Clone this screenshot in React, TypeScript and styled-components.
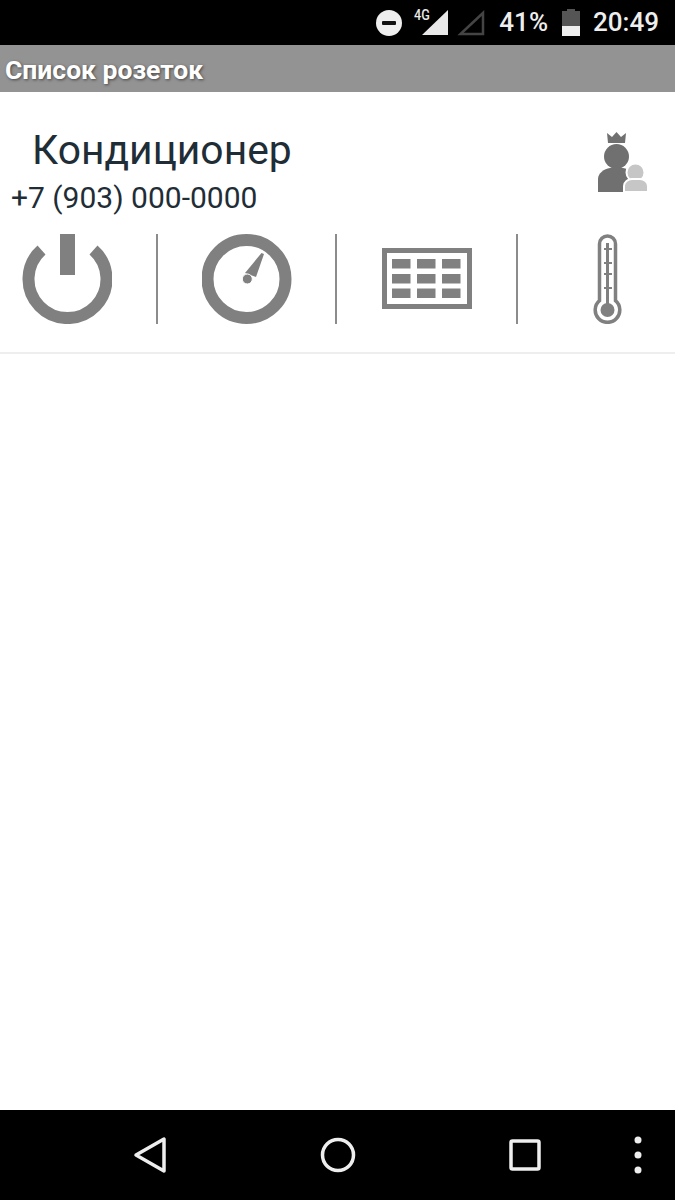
import React from 'react'
import styled, { createGlobalStyle } from 'styled-components'

const GlobalStyle = createGlobalStyle`
  html, body {
    margin: 0;
    padding: 0;
    background: #fff;
    font-family: Roboto, "Noto Sans", sans-serif;
  }
`

const Page = styled.div`
  display: flex;
  flex-direction: column;
  width: 675px;
  height: 1200px;
  overflow: hidden;
  background: #fff;
`

const StatusBar = styled.div`
  display: flex;
  align-items: center;
  justify-content: flex-end;
  flex-shrink: 0;
  height: 45px;
  padding-right: 16px;
  background: #000;
  color: #eee;
`

const StatusText = styled.span<{ $left: number }>`
  margin-left: ${(p) => p.$left}px;
  font-size: 26px;
  font-weight: 500;
  line-height: 45px;
`

const StatusIcon = styled.svg<{ $left: number }>`
  display: block;
  margin-left: ${(p) => p.$left}px;
`

const NetworkLabel = styled.span`
  align-self: flex-start;
  width: 18px;
  margin-left: 12px;
  margin-right: -11px;
  padding-top: 8px;
  font-size: 14px;
  font-weight: 500;
  line-height: 14px;
  color: #e8e8e8;
  white-space: nowrap;
  transform: scaleX(0.9);
  transform-origin: left;
`

const TitleBar = styled.div`
  flex-shrink: 0;
  height: 47px;
  padding-left: 5px;
  background: #939393;
  color: #fff;
  font-size: 26.5px;
  font-weight: 700;
  line-height: 49px;
  text-shadow: 1px 1px 3px #444;
`

const Item = styled.section`
  flex-shrink: 0;
  border-bottom: 2px solid #eee;
`

const ItemHeader = styled.div`
  display: flex;
  justify-content: space-between;
  height: 142px;
`

const Names = styled.div`
  padding-top: 33px;
  color: #1f2d36;
`

const Name = styled.div`
  padding-left: 32px;
  font-size: 40.8px;
  line-height: 50px;
`

const Phone = styled.div`
  padding-left: 11px;
  font-size: 30px;
  line-height: 46px;
`

const OwnerIcon = styled.svg`
  display: block;
  margin: 40px 26px 0 0;
`

const Actions = styled.div`
  display: flex;
  gap: 44px;
  padding: 0 0 28px 22px;
`

const ActionIcon = styled.svg`
  display: block;
  flex-shrink: 0;
  width: 90px;
  height: 90px;
  color: #808080;
`

const Divider = styled.div<{ $nudge?: number }>`
  flex-shrink: 0;
  width: 2px;
  height: 90px;
  margin-left: ${(p) => p.$nudge || 0}px;
  margin-right: ${(p) => -(p.$nudge || 0)}px;
  background: #8c8c8c;
`

const Spacer = styled.div`
  flex: 1;
`

const NavBar = styled.nav`
  display: flex;
  align-items: center;
  flex-shrink: 0;
  height: 90px;
  padding-left: 132px;
  background: #000;
  color: #eee;
`

const NavIcon = styled.svg<{ $left: number }>`
  display: block;
  margin-left: ${(p) => p.$left}px;
`

const App: React.FC = () => (
  <Page>
    <GlobalStyle />
    <StatusBar>
      <StatusIcon $left={0} width="26" height="26" viewBox="0 0 26 26">
        <circle cx="13" cy="13" r="13" fill="#eee" />
        <rect x="6" y="11" width="14" height="4" rx="1" fill="#111" />
      </StatusIcon>
      <NetworkLabel>4G</NetworkLabel>
      <StatusIcon $left={0} width="28" height="26" viewBox="0 0 28 26">
        <path d="M27 0V25H1Z" fill="#e8e8e8" />
      </StatusIcon>
      <StatusIcon $left={8} width="28" height="26" viewBox="0 0 28 26">
        <path d="M26 3V24H3.500Z" fill="none" stroke="#444" strokeWidth="2.500" />
      </StatusIcon>
      <StatusText $left={14}>41%</StatusText>
      <StatusIcon $left={14} width="18" height="27" viewBox="0 0 18 27">
        <path d="M5 0H13V2H18V18H0V2H5Z" fill="#555" />
        <rect x="0" y="17" width="18" height="10" fill="#eee" />
      </StatusIcon>
      <StatusText $left={13}>20:49</StatusText>
    </StatusBar>
    <TitleBar>Список розеток</TitleBar>
    <Item>
      <ItemHeader>
        <Names>
          <Name>Кондиционер</Name>
          <Phone>+7 (903) 000-0000</Phone>
        </Names>
        <OwnerIcon width="52" height="60" viewBox="0 0 52 60">
          <path d="M10 1L15 5L19.500 0L24 5L29 1L28 11H11Z" fill="#707070" />
          <circle cx="19.500" cy="24.500" r="12.500" fill="#707070" />
          <path d="M1 60V47C1 41 7 37 13 36H26C32 37 38 41 38 47V60Z" fill="#707070" />
          <circle cx="38.500" cy="40.500" r="9" fill="#c6c6c6" stroke="#fff" strokeWidth="2" />
          <path d="M27 60V54C27 50 31 47 35 47H43C47 47 51 50 51 54V60Z" fill="#c6c6c6" stroke="#fff" strokeWidth="2" />
        </OwnerIcon>
      </ItemHeader>
      <Actions>
        <ActionIcon viewBox="0 0 90 90">
          <path d="M19.500 16A39 39 0 1 0 71.500 16" fill="none" stroke="currentColor" strokeWidth="12" />
          <rect x="38" y="0" width="15" height="41" fill="currentColor" />
        </ActionIcon>
        <Divider />
        <ActionIcon viewBox="0 0 90 90">
          <circle cx="44.500" cy="45" r="39" fill="none" stroke="currentColor" strokeWidth="12" />
          <path d="M59.500 19L62 20L54 43L43 39Z" fill="currentColor" />
          <circle cx="45.300" cy="45" r="5" fill="currentColor" stroke="#fff" strokeWidth="1" />
        </ActionIcon>
        <Divider $nudge={-1} />
        <ActionIcon viewBox="0 0 90 90">
          <rect x="2.500" y="16.500" width="85" height="56" fill="none" stroke="currentColor" strokeWidth="5" />
          {[10, 35, 60].map((x) =>
            [25, 40, 54.500].map((y) => (
              <rect key={`${x}-${y}`} x={x} y={y} width="18.500" height="9.500" fill="currentColor" />
            )),
          )}
        </ActionIcon>
        <Divider />
        <ActionIcon viewBox="0 0 90 90">
          <path
            d="M37.500 66.700V10A8 8 0 0 1 53.500 10V66.700A12.300 12.300 0 1 1 37.500 66.700Z"
            fill="none"
            stroke="currentColor"
            strokeWidth="3.500"
          />
          <rect x="44" y="9" width="3" height="62" fill="currentColor" />
          {[14, 28, 39, 53].map((y) => (
            <rect key={y} x="42" y={y} width="8" height="2" fill="currentColor" />
          ))}
          <circle cx="45.500" cy="76" r="7" fill="currentColor" />
        </ActionIcon>
      </Actions>
    </Item>
    <Spacer />
    <NavBar>
      <NavIcon $left={0} width="36" height="38" viewBox="0 0 36 38">
        <path d="M32 3V35L4 19Z" fill="none" stroke="currentColor" strokeWidth="3.500" strokeLinejoin="round" />
      </NavIcon>
      <NavIcon $left={151} width="38" height="38" viewBox="0 0 38 38">
        <circle cx="19" cy="19" r="15.500" fill="none" stroke="currentColor" strokeWidth="3.500" />
      </NavIcon>
      <NavIcon $left={151} width="34" height="34" viewBox="0 0 34 34">
        <rect x="3" y="3" width="28" height="28" rx="1.500" fill="none" stroke="currentColor" strokeWidth="3.500" />
      </NavIcon>
      <NavIcon $left={92} width="8" height="38" viewBox="0 0 8 38">
        <circle cx="4" cy="4" r="3.500" fill="currentColor" />
        <circle cx="4" cy="19" r="3.500" fill="currentColor" />
        <circle cx="4" cy="34" r="3.500" fill="currentColor" />
      </NavIcon>
    </NavBar>
  </Page>
)

export default App
